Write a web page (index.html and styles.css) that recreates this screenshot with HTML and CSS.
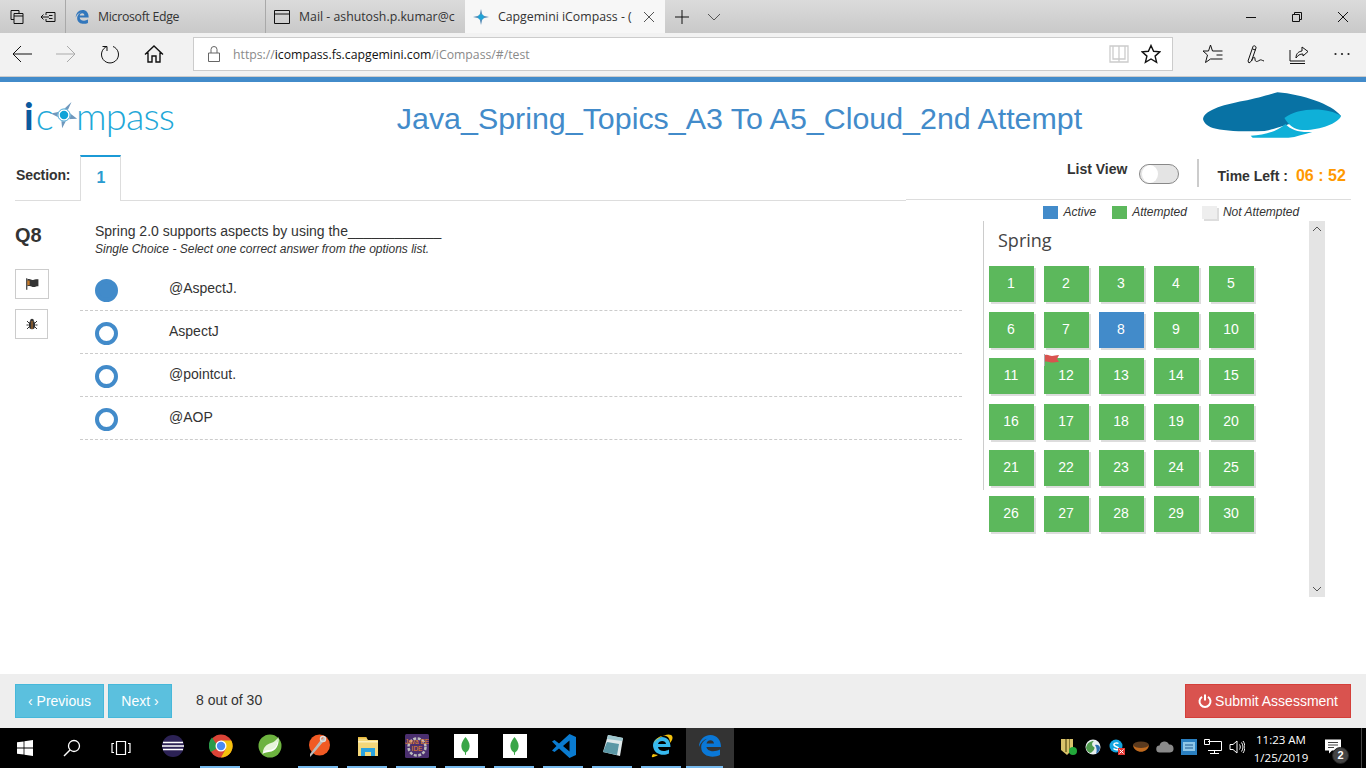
FILE: index.html
```html
<!DOCTYPE html>
<html lang="en">
<head>
<meta charset="utf-8">
<title>Capgemini iCompass</title>
<link rel="stylesheet" href="styles.css">
</head>
<body>
<div class="tabstrip">
  <div class="strip-tools">
    <svg class="ic16" viewBox="0 0 16 16"><path d="M2 1.500h8v3M2 1.500v9h3M5 4.500h9v10H5zM5 7h9" class="k"/></svg>
    <svg class="ic16" viewBox="0 0 16 16"><path d="M6 3.500h9v9H6M6 3.500V6M6 10v2.500M1 8h8M3.500 5.500 1 8l2.500 2.500M9 6.500h3.500M9 9.500h3.500" class="k"/></svg>
  </div>
  <div class="tab">
    <svg class="ic16" viewBox="0 0 18 18"><path d="M2 9.500C2 4.500 5.500 1 9.600 1c4.200 0 6.900 3 6.900 8.500H6.400c.2 3.700 5.500 4.600 9.300 2.400v3.800C10.500 18.300 2 16 3.800 8.300 5 5.500 7 4.200 8.400 3.700 5.300 4.300 3 6.500 2 9.500zM6.500 7.200h5.200C11.600 4 7 4 6.500 7.200z" fill="#3277bc"/></svg>
    <span class="tab-tight">Microsoft Edge</span>
  </div>
  <div class="tab tab-mail">
    <svg class="ic16" viewBox="0 0 16 16"><path d="M.5 1.500h15v13H.5zM.5 5h15" class="k"/></svg>
    <span>Mail - ashutosh.p.kumar@c</span>
  </div>
  <div class="tab tab-active">
    <svg class="ic16" viewBox="0 0 16 16"><path d="M8 0l1.500 6.500L16 8l-6.500 1.500L8 16 6.500 9.500 0 8l6.500-1.500z" fill="#5b8fb8"/><circle cx="8" cy="8" r="2.800" fill="#1ea4d8"/></svg>
    <span class="tab-title">Capgemini iCompass - (</span>
    <svg class="tab-close" viewBox="0 0 12 12"><path d="M1 1l10 10M11 1 1 11" class="g"/></svg>
  </div>
  <svg class="plus" viewBox="0 0 14 14"><path d="M7 0v14M0 7h14" class="k"/></svg>
  <svg class="chev" viewBox="0 0 14 8"><path d="M1 1l6 6 6-6" class="g"/></svg>
  <div class="winctl">
    <svg class="ic10" viewBox="0 0 10 10"><path d="M0 5.500h10" class="k"/></svg>
    <svg class="ic10" viewBox="0 0 10 10"><path d="M.5 2.500h7v7h-7zM2.500 2.500V.5h7v7h-2" class="k"/></svg>
    <svg class="ic10" viewBox="0 0 10 10"><path d="M0 0l10 10M10 0 0 10" class="k"/></svg>
  </div>
</div>

<div class="toolbar">
  <div class="nav">
    <svg class="ic20" viewBox="0 0 20 20"><path d="M20 10H1M9 2l-8 8 8 8" class="k"/></svg>
    <svg class="ic20" viewBox="0 0 20 20"><path d="M0 10h19M11 2l8 8-8 8" class="l"/></svg>
    <svg class="ic20" viewBox="0 0 20 20"><path d="M7 2.500A8.500 8.500 0 1 0 13 2.500M7 7V2.500H2.500" class="k"/></svg>
    <svg class="ic20" viewBox="0 0 20 20"><path d="M1 10.500 10 2l9 8.500M4 8.500V18h4v-6h4v6h4V8.500" class="k2"/></svg>
  </div>
  <div class="urlbox">
    <svg class="lock" viewBox="0 0 12 16"><path d="M.5 7h11v8.500H.5zM3 7V3.500a3 3 0 0 1 6 0V7" class="d"/></svg>
    <span class="url"><span class="u-dim">https://</span>icompass.fs.capgemini.com<span class="u-dim">/iCompass/#/test</span></span>
    <svg class="ic20 book" viewBox="0 0 20 20"><path d="M1 2h18v16H1zM10 2v16M4 2v13h6M16 2v13h-6" class="b"/></svg>
    <svg class="ic20" viewBox="0 0 20 20"><path d="M10 1.500l2.600 5.800 6.300.6-4.800 4.200 1.500 6.200L10 15l-5.600 3.300 1.500-6.200L1.100 7.900l6.300-.6z" class="k2"/></svg>
  </div>
  <div class="actions">
    <svg class="ic20" viewBox="0 0 20 20"><path d="M7.500 1 5.500 7H0l4.500 4-2 7.500 5-3.500h12M7.500 1l2 6h10M13.500 11h6" class="k"/></svg>
    <svg class="ic20" viewBox="0 0 20 20"><path d="M1 17 6 2.500c.5-1.500 3.500-.5 3 1.500L4.500 17 2 19zM4.500 17C6 13 8 12 8 15c0 3 2 3 4 1.500s3 0 5 .5M5.500 5l3 1" class="k"/></svg>
    <svg class="ic20 share" viewBox="0 0 20 20"><path d="M1 6v11h15M1 19.500h15M7 14c0-5 3-6.500 6-7V3l6 4.500-5 4.500v-2c-3 0-5 1-7 4z" class="k"/></svg>
    <svg class="dots" viewBox="0 0 16 4"><circle cx="1.500" cy="2" r="1.100"/><circle cx="8" cy="2" r="1.100"/><circle cx="14.500" cy="2" r="1.100"/></svg>
  </div>
</div>
<div class="accent"></div>

<main class="page">
  <header class="head">
    <div class="logo">
      <span class="logo-i">i</span><span class="logo-c">c</span><svg class="compass" viewBox="0 0 32 32"><path d="M24 2l-4.500 10L30 20l-11 .5L14 30l-1-10L2 14.500l11.500-2.500z" fill="#6f98bd"/><circle cx="16" cy="16" r="7" fill="#fff"/><circle cx="16" cy="16" r="6.500" fill="none" stroke="#3b9fd0"/><circle cx="16" cy="16" r="4.500" fill="#0fa3d8"/></svg><span class="logo-c logo-rest">mpass</span>
    </div>
    <h1 class="title">Java_Spring_Topics_A3 To A5_Cloud_2nd Attempt</h1>
    <svg class="brand" viewBox="0 0 140 46"><path d="M0 27C2 17 25 12 40 9 55 6 65 3 75 0c25 2 55 12 64 24-10 4-35 2-55 9-8 2-14 5-22 6-20 1-42 0-52-3C4 34 1 31 0 27z" fill="#0872a4"/><path d="M82 26c14-11 44-11 57-2-3 8-24 15-39 14-8 0-14-5-18-12z" fill="#0fb0d8"/><path d="M48 44c14-1 26-4 35-12 5 6 15 9 27 8-8 2-16 5-24 6H50z" fill="#0fb0d8"/></svg>
  </header>

  <div class="secrow">
    <div class="secleft">
      <span class="seclabel">Section:</span>
      <div class="sectab">1</div>
      <div class="secfill"></div>
    </div>
    <div class="secright">
      <span class="listview">List View</span>
      <span class="toggle"><span class="knob"></span></span>
      <span class="vrule"></span>
      <span class="timelabel">Time Left :</span>
      <span class="timer">06 : 52</span>
    </div>
  </div>

  <div class="content">
    <aside class="qside">
      <div class="qno">Q8</div>
      <button class="mini mini-wide"><svg class="ic14" viewBox="0 0 12 12"><path d="M1 1h1v10H1z" fill="#333"/><path d="M2 2c3-1 3 1 5 .5S10 2 11.500 2v6c-2 0-3 1-5 .5S4 7.500 2 8z" fill="#333"/><path d="M2 3h2v4H2z" fill="#c77b2a"/></svg></button>
      <button class="mini"><svg class="ic12" viewBox="0 0 12 12"><ellipse cx="6" cy="7" rx="3.200" ry="4.200" fill="#333"/><circle cx="6" cy="2.500" r="1.800" fill="#333"/><path d="M1 3l2 2M11 3 9 5M.5 7h2M11.500 7h-2M1 11l2-2M11 11 9 9" stroke="#333" fill="none"/><path d="M6 3v8" stroke="#c77b2a"/></svg></button>
    </aside>
    <section class="qmain">
      <div class="qhead">
        <p class="qtext">Spring 2.0 supports aspects by using the____________</p>
        <p class="qhint">Single Choice - Select one correct answer from the options list.</p>
      </div>
      <div class="opt"><span class="radio radio-on"></span><span class="opt-text">@AspectJ.</span></div>
      <div class="opt"><span class="radio"></span><span class="opt-text">AspectJ</span></div>
      <div class="opt"><span class="radio"></span><span class="opt-text">@pointcut.</span></div>
      <div class="opt"><span class="radio"></span><span class="opt-text">@AOP</span></div>
    </section>
    <section class="qpanel">
      <div class="legend">
        <span class="sw sw-blue"></span><em>Active</em>
        <span class="sw sw-green"></span><em>Attempted</em>
        <span class="sw sw-grey"></span><em>Not Attempted</em>
      </div>
      <div class="palette">
        <div class="palette-rule"></div>
        <div class="palette-body">
          <h2 class="topic">Spring</h2>
          <div class="tiles">
            <div class="tile">1</div><div class="tile">2</div><div class="tile">3</div><div class="tile">4</div><div class="tile">5</div>
            <div class="tile">6</div><div class="tile">7</div><div class="tile tile-active">8</div><div class="tile">9</div><div class="tile">10</div>
            <div class="tile">11</div>
            <div class="tile">12<svg class="tileflag" viewBox="0 0 15 12"><path d="M.5 0v12" stroke="#aaa"/><path d="M1 1c3-1 5 1 7 1s4-1 7-1l-2 4 2 3c-3 0-5 .5-7 .5S4 7 1 7.500z" fill="#d9534f"/></svg></div>
            <div class="tile">13</div><div class="tile">14</div><div class="tile">15</div>
            <div class="tile">16</div><div class="tile">17</div><div class="tile">18</div><div class="tile">19</div><div class="tile">20</div>
            <div class="tile">21</div><div class="tile">22</div><div class="tile">23</div><div class="tile">24</div><div class="tile">25</div>
            <div class="tile">26</div><div class="tile">27</div><div class="tile">28</div><div class="tile">29</div><div class="tile">30</div>
          </div>
        </div>
        <div class="scrollbar">
          <svg class="sb-arrow" viewBox="0 0 10 6"><path d="M1 5l4-4 4 4" class="g"/></svg>
          <svg class="sb-arrow" viewBox="0 0 10 6"><path d="M1 1l4 4 4-4" class="g"/></svg>
        </div>
      </div>
    </section>
  </div>

  <footer class="foot">
    <button class="btn btn-info">‹ Previous</button>
    <button class="btn btn-info btn-next">Next ›</button>
    <span class="progress">8 out of 30</span>
    <button class="btn btn-danger"><svg class="ic14" viewBox="0 0 14 14"><path d="M4 2.800a5.500 5.500 0 1 0 6 0M7 .5v6" fill="none" stroke="#fff" stroke-width="2"/></svg> Submit Assessment</button>
  </footer>
</main>

<div class="taskbar">
  <div class="tb-sys">
    <svg class="ic16" viewBox="0 0 16 16"><path d="M0 2.300 6.600 1.400v6.200H0zM7.400 1.300 16 0v7.600H7.400zM0 8.400h6.600v6.200L0 13.700zM7.400 8.400H16V16l-8.600-1.200z" fill="#fff"/></svg>
    <svg class="ic18" viewBox="0 0 18 18"><circle cx="11" cy="7" r="5.500" fill="none" stroke="#fff" stroke-width="1.300"/><path d="M7 11l-6 6" stroke="#fff" stroke-width="1.500"/></svg>
    <svg class="ic20" viewBox="0 0 20 16"><path d="M5.500 1.500h9v13h-9zM3 3.500H1v9h2M17 3.500h2v9h-2" fill="none" stroke="#fff" stroke-width="1.200"/></svg>
  </div>
  <div class="tb-apps">
    <div class="app"><svg class="ic24" viewBox="0 0 24 24"><path d="M8 0a12 12 0 0 0 0 24 12 12 0 0 1 0-24z" fill="#e88a1a"/><circle cx="13" cy="12" r="11" fill="#2c2255"/><path d="M3 8.500h20M2 12h22M3 15.500h20" stroke="#fff" stroke-width="1.500"/></svg></div>
    <div class="app app-on"><svg class="ic24" viewBox="0 0 24 24"><circle cx="12" cy="12" r="11.500" fill="#db4437"/><path d="M12 12 1.800 18A11.500 11.500 0 0 1 3 3.500l6 9z" fill="#2a9a4a"/><path d="M12 6.500h10.300A11.500 11.500 0 0 1 12 23.500l5-9z" fill="#f4c20d"/><circle cx="12" cy="12" r="5.500" fill="#fff"/><circle cx="12" cy="12" r="4.200" fill="#4a8af4"/></svg></div>
    <div class="app"><svg class="ic24" viewBox="0 0 24 24"><circle cx="12" cy="12" r="11.500" fill="#6db33f"/><path d="M20.500 2.500c1 6-1 13-7 15-4 1.200-7 .5-9 2.500 1-5 3-7 8-8 3-.5 6-3 8-6-1 3.500-4 6-7 7 4 0 6-2 7-10.500z" fill="#fff"/><path d="M20 4c0 7-3 12-9 12-3 0-5 1-6 3 0-6 4-9 8-10 3-.7 5-3 7-5z" fill="#e8f4da"/></svg></div>
    <div class="app app-on"><svg class="ic24" viewBox="0 0 24 24"><circle cx="12.500" cy="11" r="10.500" fill="#f15a24"/><path d="M17 3l1.500 2.500L16 8 5 21l-2 2 0-3L13 7z" fill="#bbb"/><circle cx="16" cy="5" r="2.500" fill="none" stroke="#ddd" stroke-width="1.500"/></svg></div>
    <div class="app app-on"><svg class="ic24" viewBox="0 0 24 24"><path d="M2 3h8l2 3h10v16H2z" fill="#f4d77a"/><path d="M2 3h8l1 1.500H2z" fill="#e8b93c"/><path d="M2 7h20v1.500H2z" fill="#fdf0bd"/><path d="M5 22v-8h14v8h-4v-4H9v4z" fill="#2aa3e0"/></svg></div>
    <div class="app app-on"><svg class="ic24" viewBox="0 0 24 24"><rect width="24" height="24" rx="1.500" fill="#4b2f6f"/><circle cx="12" cy="13" r="8.500" fill="none" stroke="#bdbdbd" stroke-width="2.500" stroke-dasharray="3 1.500"/><text x="12" y="10" text-anchor="middle" class="jee-txt">Java EE</text><text x="12" y="17" text-anchor="middle" class="jee-txt">IDE</text></svg></div>
    <div class="app app-on"><div class="mongo"><svg class="leaf" viewBox="0 0 12 26"><path d="M6 0c3 4 6 8 6 13s-3 8-5 9l-.5 4h-1L5 22c-2-1-5-4-5-9S3 4 6 0z" fill="#3aa648"/></svg></div></div>
    <div class="app app-on"><div class="mongo"><svg class="leaf" viewBox="0 0 12 26"><path d="M6 0c3 4 6 8 6 13s-3 8-5 9l-.5 4h-1L5 22c-2-1-5-4-5-9S3 4 6 0z" fill="#3aa648"/></svg></div></div>
    <div class="app app-on"><svg class="ic24" viewBox="0 0 24 24"><path d="M17.500 0 24 3v18l-6.500 3L7 14.500 2.500 18 0 16.500 4.500 12 0 7.500 2.500 6 7 9.500zM17.500 6.500 11 12l6.500 5.500z" fill="#0a7bd0"/></svg></div>
    <div class="app app-on"><svg class="ic24" viewBox="0 0 24 24"><path d="M7 1l15 3-3 18-17-4z" fill="#dfe8ea"/><path d="M7 1l15 3-1 3L6 5z" fill="#9ec7cf"/><path d="M6 8l12 2-2 11-14-3z" fill="#5b97a5"/></svg></div>
    <div class="app app-on"><svg class="ic24" viewBox="0 0 24 24"><path d="M3 12C3 6.500 7 3 12 3s8.500 3.500 8.500 10H8c.5 4.500 7 5 11 2.500v4c-6 3-15 1-16-7.500zM8 10h8c0-4-7.500-4-8 0z" fill="#37b9ee"/><path d="M3 20C0 24 3 24 8 21M4 9C8 3 17-1 21 1c3 2 1 6-1 8 0-3-1-6-4-7C10 1 6 5 4 9z" fill="#f4c20d"/></svg></div>
    <div class="app app-cur"><svg class="ic24" viewBox="0 0 24 24"><path d="M1 13C1 6 6 1 12.500 1 19 1 23 6 23 13H8.500c.5 4.500 8 5.500 13.500 2.500v5.500C14 25 1 22 3.500 10.500 5 7 8 5 10 4.500 5.500 5.500 2.500 8.500 1 13zM8.500 9.500H16C15.800 5 9.200 5 8.500 9.500z" fill="#0a78d7"/></svg></div>
  </div>
  <div class="tray">
    <svg class="ic18" viewBox="0 0 18 18"><path d="M1 1h12v10l-6 6-6-5z" fill="#d9c26a"/><path d="M5 1h2v13H5zM9 1h1v11H9z" fill="#8a7a36"/><circle cx="13" cy="13" r="4" fill="#22a83a"/></svg>
    <svg class="ic16" viewBox="0 0 16 16"><circle cx="8" cy="8" r="7.500" fill="#e8eef0"/><path d="M1 9c1-5 4-7 8-7-3 2-2 5 0 6s-2 6-4 6C3 13 1.500 11 1 9z" fill="#4e9a4c"/><path d="M10 6c3-1 5 1 5 3s-2 5-4 6c1-3 1-6-1-9z" fill="#2a6fb0"/></svg>
    <svg class="ic16" viewBox="0 0 16 16"><circle cx="7" cy="7" r="6.500" fill="#12a5e0"/><path d="M9.500 4.500C8 3.500 4.500 4 5 6s4.500 1.500 4.500 3.500S6 11 4.500 9.500" fill="none" stroke="#fff" stroke-width="1.500"/><rect x="9" y="9" width="7" height="7" fill="#e53935"/><path d="M10.500 10.500l4 4M14.500 10.500l-4 4" stroke="#fff"/></svg>
    <svg class="ic16" viewBox="0 0 16 12"><ellipse cx="8" cy="4" rx="8" ry="3.500" fill="#5b3a1e"/><path d="M0 4c1 9 15 9 16 0-2 4-14 4-16 0z" fill="#c06a1e"/></svg>
    <svg class="ic18" viewBox="0 0 18 12"><path d="M4 11.500a3.500 3.500 0 0 1-.5-7 5 5 0 0 1 9.500-1 4 4 0 0 1 1 8z" fill="#8a8a8a"/></svg>
    <svg class="ic16" viewBox="0 0 16 16"><rect width="16" height="16" fill="#2a7fc0"/><rect x="2" y="3" width="12" height="9" fill="#8fc7e8"/><path d="M4 6h8M4 9h8" stroke="#205a90"/></svg>
    <svg class="ic18" viewBox="0 0 18 16"><path d="M4 2.500h13.500v9H4M10.500 11.500v3M6 14.500h9M.5.500h5v5h-5z" fill="none" stroke="#fff"/></svg>
    <svg class="ic16" viewBox="0 0 16 16"><path d="M1 5.500h3L8 2v12L4 10.500H1zM10.500 5.500c1 1.500 1 3.500 0 5M12.500 3.500c2 3 2 6 0 9M14 2c2.500 3.500 2.500 8.500 0 12" fill="none" stroke="#fff"/></svg>
  </div>
  <div class="clock"><span>11:23 AM</span><span>1/25/2019</span></div>
  <div class="notif">
    <svg class="ic16" viewBox="0 0 16 15"><path d="M0 0h16v11H7l-3 3v-3H0z" fill="#fff"/><path d="M3 3h10M3 5.500h10M3 8h6" stroke="#444"/></svg>
    <span class="badge">2</span>
  </div>
</div>
</body>
</html>
```

FILE: styles.css
```css
* { box-sizing: border-box; }
html, body { margin: 0; padding: 0; }
body {
  width: 1366px;
  height: 768px;
  overflow: hidden;
  display: flex;
  flex-direction: column;
  font-family: "Liberation Sans", Arial, sans-serif;
  font-size: 14px;
  color: #333;
  background: #fff;
}
svg { display: block; flex: none; }
.k { fill: none; stroke: #111; stroke-width: 1; }
.k2 { fill: none; stroke: #111; stroke-width: 1.4; }
.g { fill: none; stroke: #555; stroke-width: 1; }
.l { fill: none; stroke: #aaa; stroke-width: 1; }
.d { fill: none; stroke: #666; stroke-width: 1; }
.b { fill: none; stroke: #ccc; stroke-width: 1.3; }
.ic10 { width: 10px; height: 10px; }
.ic12 { width: 12px; height: 12px; }
.ic14 { width: 14px; height: 14px; }
.ic16 { width: 16px; height: 16px; }
.ic18 { width: 18px; height: 18px; }
.ic20 { width: 20px; height: 20px; }
.ic24 { width: 24px; height: 24px; }

/* browser tabs */
.tabstrip {
  height: 33px;
  flex: none;
  display: flex;
  align-items: stretch;
  background: linear-gradient(#dbdbdb, #c9c9c9);
  font-family: "Open Sans", sans-serif;
  font-size: 12.3px;
  color: #333;
}
.strip-tools {
  width: 65px;
  display: flex;
  align-items: center;
  gap: 15px;
  padding-left: 9px;
}
.tab {
  width: 200px;
  display: flex;
  align-items: center;
  gap: 8px;
  padding-left: 8px;
  border-left: 1px solid #a9a9a9;
  white-space: nowrap;
  overflow: hidden;
}
.tab-tight { letter-spacing: -.3px; }
.tab-mail { gap: 9px; }
.tab-active {
  background: #f7f7f7;
  border-left: 0;
  gap: 9px;
  padding-right: 6px;
}
.tab-title { width: 134px; overflow: hidden; flex: none; }
.tab-close { width: 12px; height: 12px; margin-left: auto; margin-right: 4px; }
.plus { width: 14px; height: 14px; align-self: center; margin-left: 10px; }
.chev { width: 14px; height: 8px; align-self: center; margin-left: 18px; }
.winctl {
  margin-left: auto;
  display: flex;
  align-items: center;
  gap: 36px;
  padding-right: 18px;
}

/* toolbar */
.toolbar {
  height: 44px;
  flex: none;
  display: flex;
  align-items: center;
  background: #f2f2f2;
  border-bottom: 1px solid #ccc;
  padding-bottom: 1px;
}
.nav {
  width: 193px;
  display: flex;
  align-items: center;
  gap: 24px;
  padding-left: 12px;
}
.urlbox {
  width: 980px;
  height: 34px;
  display: flex;
  align-items: center;
  background: #fff;
  border: 1px solid #ccc;
  padding-left: 14px;
  padding-right: 11px;
}
.lock { width: 12px; height: 16px; margin-right: 13px; }
.url {
  flex: 1;
  font-family: "Open Sans", sans-serif;
  font-size: 12.25px;
  color: #111;
}
.u-dim { color: #8a8a8a; }
.book { margin-right: 12px; }
.actions {
  flex: 1;
  display: flex;
  align-items: center;
  gap: 24px;
  padding-left: 30px;
}
.share { margin-left: -2px; }
.dots { width: 16px; height: 4px; fill: #222; margin-left: 1px; }
.accent { height: 5px; flex: none; background: #428bca; }

/* page */
.page { flex: 1; display: flex; flex-direction: column; min-height: 0; }
.head {
  height: 73px;
  flex: none;
  display: flex;
  align-items: flex-start;
  padding-left: 24px;
  padding-right: 24px;
}
.logo {
  width: 151px;
  display: flex;
  align-items: baseline;
  font-family: Lato, sans-serif;
  font-weight: 300;
  font-size: 38px;
  line-height: 46px;
  letter-spacing: -.8px;
  margin-top: 10px;
}
.logo-i { color: #0b5a9e; font-weight: 700; margin-right: 3px; }
.logo-c { color: #1fa8d8; }
.compass { width: 30px; height: 30px; margin: 0 -3px 0 -4px; align-self: center; }
.title {
  flex: 1;
  margin: 19px 0 0;
  text-align: center;
  font-weight: 400;
  font-size: 30.4px;
  line-height: 34px;
  color: #428bca;
  padding-left: 101px;
  white-space: nowrap;
}
.brand { width: 139px; height: 46px; margin-top: 10px; }

.secrow { height: 46px; flex: none; display: flex; padding-left: 15px; padding-right: 15px; }
.secleft { width: 891px; display: flex; align-items: stretch; }
.seclabel {
  width: 65px;
  font-weight: bold;
  color: #333;
  padding: 12px 0 0 1px;
  border-bottom: 1px solid #ddd;
  letter-spacing: -.1px;
}
.sectab {
  width: 41px;
  border: 1px solid #ddd;
  border-top: 2px solid #1b9ad6;
  border-bottom: 0;
  text-align: center;
  font-size: 16px;
  font-weight: bold;
  color: #2a9bd0;
  padding-top: 12px;
  padding-left: 1px;
}
.secfill { flex: 1; border-bottom: 1px solid #ddd; }
.secright {
  flex: 1;
  display: flex;
  align-items: flex-start;
  border-bottom: 1px solid #ddd;
  height: 45px;
  padding-left: 161px;
}
.listview { font-weight: bold; margin-top: 6px; white-space: nowrap; }
.toggle {
  width: 40px;
  height: 20px;
  margin: 9px 0 0 12px;
  border: 1px solid #888;
  border-radius: 10px;
  background: #e4e4e4;
  flex: none;
}
.knob { display: block; width: 16px; height: 18px; border-radius: 50%; background: #fff; margin-left: 2px; }
.vrule { width: 2px; height: 28px; background: #ccc; margin: 4px 18px 0 18px; flex: none; }
.timelabel { font-weight: bold; margin-top: 13px; white-space: nowrap; }
.timer { font-size: 16px; font-weight: bold; color: #f90; margin: 12px 0 0 8px; white-space: nowrap; }

/* content */
.content { flex: 1; display: flex; padding-left: 15px; min-height: 0; }
.qside { width: 65px; flex: none; display: flex; flex-direction: column; align-items: flex-start; }
.qno { font-size: 20px; font-weight: bold; line-height: 24px; margin-top: 22px; margin-bottom: 22px; color: #333; }
.mini {
  width: 33px;
  height: 30px;
  padding: 0;
  background: #fff;
  border: 1px solid #ccc;
  margin-bottom: 10px;
  display: flex;
  align-items: center;
  justify-content: center;
}
.mini-wide { width: 34px; }
.qmain { width: 882px; flex: none; }
.qhead { padding: 22px 0 0 15px; height: 67px; }
.qtext { margin: 0; line-height: 17px; }
.qhint { margin: 1px 0 0; font-size: 12px; font-style: italic; line-height: 16px; color: #333; }
.opt {
  height: 43px;
  display: flex;
  align-items: center;
  padding-left: 15px;
  border-bottom: 1px dashed #ccc;
}
.radio {
  width: 23px;
  height: 23px;
  border-radius: 50%;
  border: 4px solid #428bca;
  flex: none;
  margin-top: 2px;
}
.radio-on { background: #428bca; }
.opt-text { margin-left: 51px; margin-top: -2px; }

.qpanel { flex: 1; margin-left: 21px; min-width: 0; }
.legend {
  height: 20px;
  display: flex;
  align-items: center;
  padding: 2px 0 0 60px;
  font-size: 12px;
  color: #333;
}
.legend em { margin-left: 5.5px; margin-right: 15.5px; }
.sw { width: 15px; height: 13px; flex: none; }
.sw-blue { background: #428bca; }
.sw-green { background: #5cb85c; }
.sw-grey { background: #eee; box-shadow: 2px 2px 0 #ddd; }
.palette { width: 342px; height: 376px; display: flex; align-items: flex-start; }
.palette-rule { width: 1px; height: 269px; background: #ccc; flex: none; }
.palette-body { flex: 1; padding-left: 5px; }
.topic {
  margin: 0;
  font-family: "Open Sans", sans-serif;
  font-weight: 400;
  font-size: 18px;
  line-height: 24px;
  padding: 7px 0 0 9px;
  height: 45px;
  color: #444;
}
.tiles { display: grid; grid-template-columns: repeat(5, 45px); grid-auto-rows: 36px; column-gap: 10px; row-gap: 10px; }
.tile {
  position: relative;
  background: #5cb85c;
  color: #fff;
  display: flex;
  align-items: center;
  justify-content: center;
  padding-bottom: 2px;
  padding-right: 1px;
  box-shadow: 2px 2px 0 #ddd;
}
.tile-active { background: #428bca; }
.tileflag { position: absolute; left: 0; top: -4px; width: 15px; height: 12px; }
.scrollbar {
  width: 16px;
  height: 376px;
  flex: none;
  background: #e4e4e4;
  display: flex;
  flex-direction: column;
  justify-content: space-between;
  align-items: center;
  padding: 5px 0;
}
.sb-arrow { width: 10px; height: 6px; }

/* footer */
.foot {
  height: 54px;
  flex: none;
  display: flex;
  align-items: center;
  background: #eee;
  padding: 0 15px;
  gap: 4px;
}
.btn {
  height: 34px;
  font-family: inherit;
  font-size: 14px;
  color: #fff;
  padding: 0 12px;
  display: inline-flex;
  align-items: center;
  white-space: nowrap;
}
.btn-info { background: #5bc0de; border: 1px solid #46b8da; }
.btn-next { width: 64px; justify-content: center; }
.btn-danger { background: #d9534f; border: 1px solid #d43f3a; margin-left: auto; gap: 3px; }
.progress { margin-left: 20px; margin-top: -2px; }

/* taskbar */
.taskbar {
  height: 40px;
  flex: none;
  display: flex;
  align-items: stretch;
  background: #000;
  padding-right: 4px;
}
.tb-sys { width: 147px; display: flex; align-items: center; gap: 30px; padding-left: 17px; }
.tb-apps { display: flex; }
.app {
  width: 49px;
  display: flex;
  align-items: center;
  justify-content: center;
  padding-bottom: 4px;
}
.app-on { background: linear-gradient(#76b9ed, #76b9ed) 4px bottom / 40px 2px no-repeat; }
.app-cur {
  width: 48px;
  background: linear-gradient(#76b9ed, #76b9ed) left bottom / 37px 2px no-repeat, #333;
}
.jee-txt { font-family: "Liberation Sans", sans-serif; font-size: 6.5px; fill: #f08a24; }
.mongo { width: 24px; height: 24px; background: #fff; display: flex; align-items: center; justify-content: center; }
.leaf { width: 9px; height: 18px; }
.tray {
  margin-left: auto;
  display: grid;
  grid-auto-flow: column;
  grid-auto-columns: 24px;
  justify-items: center;
  align-items: center;
  padding-bottom: 2px;
}
.clock {
  width: 64px;
  display: flex;
  flex-direction: column;
  align-items: center;
  justify-content: center;
  gap: 4px;
  padding-top: 1px;
  color: #fff;
  font-family: "Open Sans", sans-serif;
  font-size: 11.5px;
  line-height: 14px;
}
.notif {
  width: 49px;
  position: relative;
  display: flex;
  align-items: center;
  padding-left: 12px;
  padding-bottom: 3px;
  border-right: 1px solid #444;
}
.badge {
  position: absolute;
  left: 19px;
  top: 19px;
  width: 17px;
  height: 17px;
  border-radius: 50%;
  background: #444;
  border: 1px solid #222;
  color: #fff;
  font-size: 11px;
  font-weight: bold;
  line-height: 15px;
  text-align: center;
}
```
